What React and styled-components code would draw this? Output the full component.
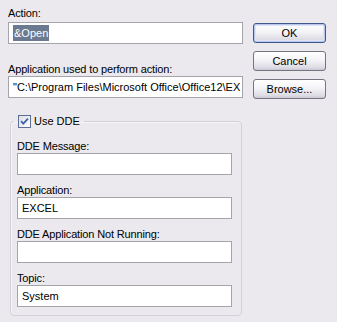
import React from 'react';
import styled, { createGlobalStyle } from 'styled-components';

const GlobalStyle = createGlobalStyle`
  html, body {
    margin: 0;
    padding: 0;
    background: #ebe9ed;
  }
  body {
    font-family: "Liberation Sans", Arial, sans-serif;
    font-size: 11px;
    color: #000;
  }
`;

const Dialog = styled.div`
  width: 337px;
  height: 322px;
  box-sizing: border-box;
  padding: 7px 11px 0 8px;
  display: flex;
  gap: 10px;
  background: #ebe9ed;
`;

const Main = styled.div`
  width: 235px;
  display: flex;
  flex-direction: column;
`;

const Side = styled.div`
  width: 73px;
  padding-top: 16px;
  display: flex;
  flex-direction: column;
  gap: 8px;
`;

const Field = styled.div`
  display: flex;
  flex-direction: column;
  margin-top: ${(p) => p.$top || 0}px;
`;

const Label = styled.div`
  line-height: 13px;
  letter-spacing: -0.15px;
  white-space: nowrap;
  margin-bottom: ${(p) => p.$gap || 0}px;
`;

const TextBox = styled.div`
  height: 22px;
  box-sizing: border-box;
  border: 1px solid #a5a4ab;
  background: #fff;
  padding: 0 4px;
  display: flex;
  align-items: center;
  overflow: hidden;
  white-space: nowrap;
`;

const Selected = styled.span`
  background: #6b7991;
  color: #fff;
  padding: 2px 1px;
  line-height: 12px;
`;

const Group = styled.fieldset`
  margin: 17px 1px 0 2px;
  padding: 0 9px 8px 6px;
  border: 1px solid #d2d1da;
  border-radius: 4px;
  box-shadow: inset 1px 1px 0 #f6f5f8;
  display: flex;
  flex-direction: column;
`;

const Legend = styled.legend`
  padding: 0 4px;
  margin-left: -3px;
  display: flex;
  align-items: center;
  gap: 3px;
  line-height: 13px;
`;

const Stack = styled.div`
  padding-top: 12px;
  display: flex;
  flex-direction: column;
  gap: 9px;
`;

const Button = styled.button`
  height: 20px;
  width: 73px;
  box-sizing: border-box;
  font-family: "Liberation Sans", Arial, sans-serif;
  font-size: 11px;
  color: #000;
  border-radius: 3px;
  border: 1px solid ${(p) => (p.$default ? '#40598a' : '#75747f')};
  background: linear-gradient(#ffffff 0%, #f4f3f7 45%, #dedde6 85%, #c9c8d4 100%);
  box-shadow: ${(p) =>
    p.$default ? 'inset 0 0 0 1px #b7c6ea, inset 0 0 0 2px #dde5f6' : 'none'};
  padding: 0;
  cursor: pointer;
`;

const Check = () => (
  <svg width="13" height="13" viewBox="0 0 13 13">
    <defs>
      <linearGradient id="cbfill" x1="0" y1="0" x2="1" y2="1">
        <stop offset="0" stopColor="#dcdde6" />
        <stop offset="1" stopColor="#ffffff" />
      </linearGradient>
    </defs>
    <rect x="0.5" y="0.5" width="12" height="12" fill="url(#cbfill)" stroke="#5d6f96" />
    <path d="M3 6.2 L5.3 8.6 L10 3.6" fill="none" stroke="#3c66b4" strokeWidth="1.8" />
  </svg>
);

const fields = [
  { label: 'DDE Message:', value: '' },
  { label: 'Application:', value: 'EXCEL' },
  { label: 'DDE Application Not Running:', value: '' },
  { label: 'Topic:', value: 'System' },
];

export default function App() {
  return (
    <>
      <GlobalStyle />
      <Dialog>
        <Main>
          <Field>
            <Label $gap={2}>Action:</Label>
            <TextBox>
              <Selected>&amp;Open</Selected>
            </TextBox>
          </Field>
          <Field $top={19}>
            <Label>Application used to perform action:</Label>
            <TextBox>"C:\Program Files\Microsoft Office\Office12\EX</TextBox>
          </Field>
          <Group>
            <Legend>
              <Check />
              Use DDE
            </Legend>
            <Stack>
              {fields.map((f) => (
                <Field key={f.label}>
                  <Label>{f.label}</Label>
                  <TextBox>{f.value}</TextBox>
                </Field>
              ))}
            </Stack>
          </Group>
        </Main>
        <Side>
          <Button $default>OK</Button>
          <Button>Cancel</Button>
          <Button>Browse...</Button>
        </Side>
      </Dialog>
    </>
  );
}
